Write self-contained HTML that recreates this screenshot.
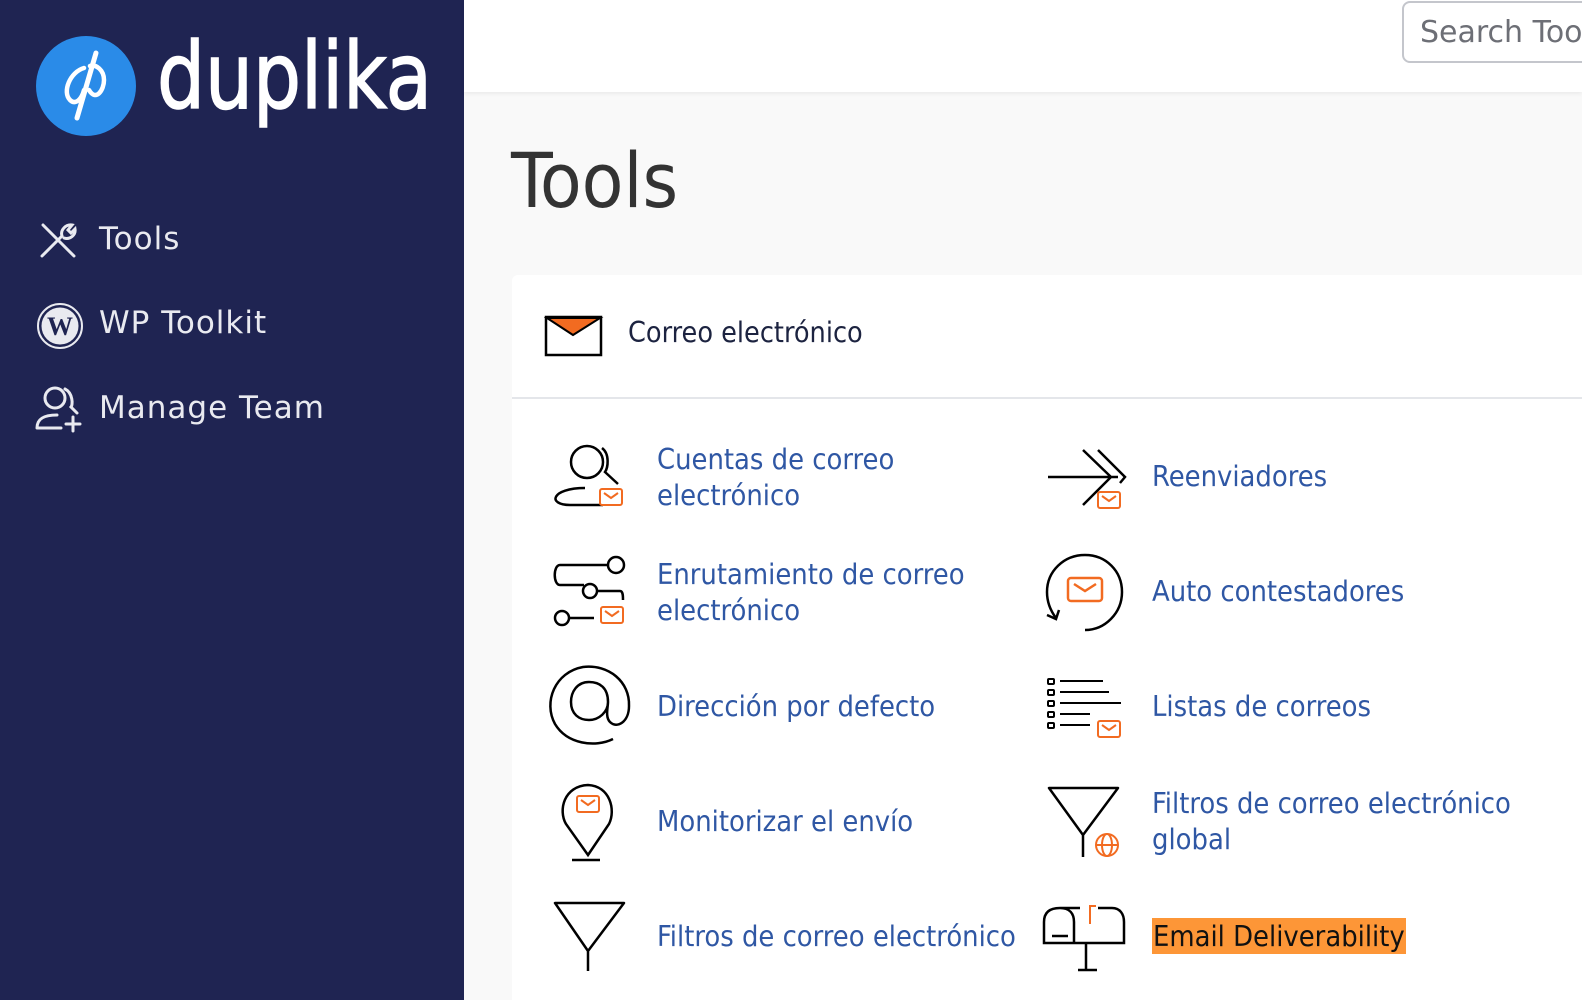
<!DOCTYPE html>
<html style="overflow:hidden;width:1582px;height:1000px"><head><meta charset="utf-8"><style>
*{margin:0;padding:0;box-sizing:border-box}
body{width:1582px;height:1000px;overflow:hidden;background:#f9f9f9;font-family:"Liberation Sans","DejaVu Sans",sans-serif;position:relative}
#side{position:absolute;left:0;top:0;width:464px;height:1000px;background:#1f2452}
#hdr{position:absolute;left:464px;top:0;right:0;height:92px;background:#fff;box-shadow:0 2px 4px rgba(0,0,0,.06)}
.nav{position:absolute;left:99px;color:#e9eaf0;letter-spacing:1px;font-family:"DejaVu Sans","Liberation Sans",sans-serif;font-size:31px}
#search{position:absolute;left:1402px;top:1px;width:200px;height:62px;border:2px solid #c4c6cc;border-radius:8px;background:#fff;color:#6d6f76;padding:12px 0 0 16px;font-family:"DejaVu Sans",sans-serif;font-size:30px;white-space:nowrap;overflow:hidden}
h1{position:absolute;left:511px;top:136px;font-size:76px;color:#333;font-family:"DejaVu Sans Condensed","Liberation Sans Narrow",sans-serif;font-weight:normal}
#card{position:absolute;left:512px;top:275px;width:1100px;height:725px;background:#fff;border-radius:6px 0 0 0}
#ct{position:absolute;left:628px;top:316px;font-size:28.5px;color:#1c2340;font-family:"DejaVu Sans Condensed","Liberation Sans",sans-serif}
#div{position:absolute;left:512px;top:397px;width:1100px;height:2px;background:#e4e6ea}
.t{position:absolute;color:#2f57a4;font-size:28.8px;line-height:36px;font-family:"DejaVu Sans Condensed","Liberation Sans",sans-serif;white-space:nowrap}
svg.i{position:absolute}
</style></head><body>
<div id="side">
<svg width="464" height="150" style="position:absolute;left:0;top:0">
<circle cx="86" cy="86" r="50" fill="#2a8be8"/>
<path d="M96 53 L77 118" stroke="#fff" stroke-width="5" stroke-linecap="round" fill="none"/>
<path d="M84 68 C70 72 62 92 70 100 C76 106 82 98 84 90 M89 90 C96 102 104 90 104 80 C104 70 96 64 90 66" stroke="#fff" stroke-width="4.5" fill="none" stroke-linecap="round"/>
<text x="157" y="108" fill="#fff" stroke="#fff" stroke-width="1.5" font-size="92" font-family="DejaVu Sans" textLength="275" lengthAdjust="spacingAndGlyphs">duplika</text>
</svg>
<svg width="40" height="40" style="position:absolute;left:40px;top:222px" fill="none" stroke="#e9eaf0" stroke-width="3" stroke-linecap="round">
<path d="M3 3 L34 34 M2 34 L22 14 M22 14 C20 8 26 2 32 3 L28 8 L31 11 L35 7 C36 13 30 18 24 16"/></svg>
<svg width="48" height="48" style="position:absolute;left:36px;top:302px" viewBox="0 0 48 48">
<circle cx="24" cy="24" r="22" fill="none" stroke="#e9eaf0" stroke-width="2"/><circle cx="24" cy="24" r="18.5" fill="#e9eaf0"/>
<text x="24" y="33" text-anchor="middle" font-size="26" font-family="Liberation Serif" font-weight="bold" fill="#1f2452">W</text></svg>
<svg width="50" height="50" style="position:absolute;left:35px;top:385px" fill="none" stroke="#e9eaf0" stroke-width="3" stroke-linecap="round">
<circle cx="20" cy="13" r="10"/><path d="M30 4 C38 8 38 20 36 22 L42 28 M2 43 C2 33 10 30 22 30 M2 43 L26 43 M38 32 L38 46 M31 39 L45 39"/></svg>
<div class="nav" style="top:221px">Tools</div>
<div class="nav" style="top:305px">WP Toolkit</div>
<div class="nav" style="top:390px">Manage Team</div>
</div>
<div id="hdr"></div>
<div id="search">Search Tools</div>
<h1>Tools</h1>
<div id="card"></div>
<svg class="i" style="left:544px;top:315px" width="60" height="44"><rect x="2" y="2" width="55" height="38" fill="#fff" stroke="#000" stroke-width="2.5"/><path d="M3 3 L29 20 L56 3Z" fill="#f26b21" stroke="#000" stroke-width="2"/></svg>
<div id="ct">Correo electrónico</div>
<div id="div"></div>

<svg class="i" width="0" height="0"><defs><g id="env"><rect x="0" y="0" width="22" height="16" rx="2" fill="#fff" stroke="#f26b21" stroke-width="2"/><path d="M4 4 L11 9 L18 4" stroke="#f26b21" stroke-width="2" fill="none"/></g></defs></svg>

<svg class="i" style="left:545px;top:440px" width="90" height="75" fill="none" stroke="#000" stroke-width="2.5">
<circle cx="42" cy="22" r="16"/><path d="M57 8 C65 14 63 28 60 32 L73 44 M58 65 L25 65 C2 65 6 48 40 48"/>
<use href="#env" x="55" y="49"/></svg>
<div class="t" style="left:657px;top:441px">Cuentas de correo<br>electrónico</div>

<svg class="i" style="left:550px;top:552px" width="85" height="80" fill="none" stroke="#000" stroke-width="2.5">
<circle cx="66" cy="13" r="8"/><path d="M58 13 L10 13 C3 13 3 33 10 33 L34 33"/><circle cx="40" cy="39" r="7"/><path d="M47 39 L70 39 C73 39 73 44 73 48"/><circle cx="12" cy="66" r="7"/><path d="M19 66 L44 66"/>
<use href="#env" x="51" y="55"/></svg>
<div class="t" style="left:657px;top:556px">Enrutamiento de correo<br>electrónico</div>

<svg class="i" style="left:545px;top:662px" width="90" height="90" fill="none" stroke="#000" stroke-width="2.5">
<path d="M68 77 C50 86 22 82 10 62 C-2 40 10 10 38 5 C64 2 85 20 84 44 C84 60 72 67 65 60 C60 55 63 45 63 40 C63 26 55 20 44 20 C32 20 26 30 26 40 C26 52 34 58 44 58 C54 58 63 50 63 40"/></svg>
<div class="t" style="left:657px;top:688px">Dirección por defecto</div>

<svg class="i" style="left:560px;top:780px" width="60" height="85" fill="none" stroke="#000" stroke-width="2.5">
<path d="M28 75 L6 44 C-2 30 4 6 28 5 C50 6 56 30 49 44 Z"/><path d="M12 80 L40 80"/>
<use href="#env" x="17" y="16"/></svg>
<div class="t" style="left:657px;top:803px">Monitorizar el envío</div>

<svg class="i" style="left:550px;top:898px" width="80" height="80" fill="none" stroke="#000" stroke-width="2.5">
<path d="M5 5 L74 5 L38 53 Z M38 53 L38 73" stroke-linejoin="round"/></svg>
<div class="t" style="left:657px;top:918px">Filtros de correo electrónico</div>

<svg class="i" style="left:1045px;top:445px" width="85" height="70" fill="none" stroke="#000" stroke-width="2.5">
<path d="M3 32 L73 32 M38 5 L66 32 L38 60 M53 5 L80 32 L75 38"/>
<use href="#env" x="53" y="47"/></svg>
<div class="t" style="left:1152px;top:458px">Reenviadores</div>

<svg class="i" style="left:1040px;top:548px" width="90" height="90" fill="none" stroke="#000" stroke-width="2.5">
<path d="M45 82 C65 82 82 65 82 44 C82 23 66 7 45 7 C24 7 7 23 7 44 C7 54 10 62 16 70 M7 67 L16 71 L19 62"/>
<g transform="translate(28,30)"><rect x="0" y="0" width="34" height="23" rx="3" stroke="#f26b21" stroke-width="2.5"/><path d="M6 6 L17 13 L28 6" stroke="#f26b21"/></g></svg>
<div class="t" style="left:1152px;top:573px">Auto contestadores</div>

<svg class="i" style="left:1045px;top:675px" width="85" height="70" fill="none" stroke="#000" stroke-width="2">
<rect x="3" y="4" width="6" height="5" rx="1"/><rect x="3" y="15" width="6" height="5" rx="1"/><rect x="3" y="26" width="6" height="5" rx="1"/><rect x="3" y="37" width="6" height="5" rx="1"/><rect x="3" y="48" width="6" height="5" rx="1"/>
<path d="M15 6 L58 6 M15 17 L64 17 M15 28 L76 28 M15 39 L45 39 M15 50 L45 50"/>
<use href="#env" x="53" y="46"/></svg>
<div class="t" style="left:1152px;top:688px">Listas de correos</div>

<svg class="i" style="left:1045px;top:783px" width="85" height="80" fill="none" stroke="#000" stroke-width="2.5">
<path d="M4 5 L73 5 L38 52 Z M38 52 L38 74" stroke-linejoin="round"/>
<g stroke="#f26b21" stroke-width="2"><circle cx="62" cy="62" r="11"/><ellipse cx="62" cy="62" rx="5" ry="11"/><path d="M51 62 L73 62"/></g></svg>
<div class="t" style="left:1152px;top:785px">Filtros de correo electrónico<br>global</div>

<svg class="i" style="left:1040px;top:898px" width="90" height="80" fill="none" stroke="#000" stroke-width="2.5">
<path d="M20 10 L40 10 M58 10 L72 10 C80 10 84 16 84 24 L84 45 L4 45 L4 24 C4 14 10 10 20 10 C30 10 34 16 34 24 L34 45 M12 38 L28 38 M46 45 L46 72 M38 72 L57 72"/>
<path d="M50 26 L50 8 L56 8" stroke="#f26b21" stroke-width="2"/></svg>
<div class="t" style="left:1152px;top:918px;background:#fd9637;color:#111;padding:0 1px;height:36px">Email Deliverability</div>
</body></html>
